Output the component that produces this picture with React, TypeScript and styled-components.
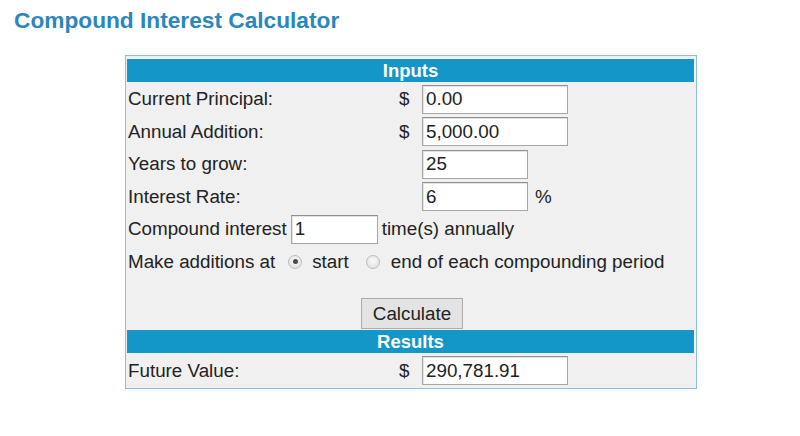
import styled, { createGlobalStyle } from "styled-components";

const Global = createGlobalStyle`
  body {
    margin: 0;
    background: #ffffff;
    font-family: "Liberation Sans", Arial, sans-serif;
    color: #222222;
  }
`;

// Title TOP
const Title = styled.h1`
  margin: 7px 0 0 14px;
  font-size: 22.7px;
  line-height: 26px;
  font-weight: bold;
  color: #2a86bd;
`;

// Calculator box
const Box = styled.div`
  margin: 22px 0 0 125px;
  width: 567px;
  border: 1px solid #8cc0d8;
  background: #f0f0f0;
  padding: 3px 2px 0 1px;
`;

const Bar = styled.div<{ $gap?: number }>`
  height: 23px;
  margin-top: ${(p) => p.$gap ?? 0}px;
  background: #1496c8;
  color: #ffffff;
  font-weight: bold;
  font-size: 18.5px;
  line-height: 23px;
  text-align: center;
`;

const Row = styled.div<{ $h?: number }>`
  display: grid;
  grid-template-columns: 271px 24px auto 1fr;
  align-items: center;
  height: ${(p) => p.$h ?? 32.5}px;
  font-size: 18.8px;
`;

const Label = styled.span`
  padding-left: 1px;
  white-space: nowrap;
`;

const Dollar = styled.span`
  padding-left: 1px;
`;

const Field = styled.input<{ $w: number }>`
  box-sizing: border-box;
  width: ${(p) => p.$w}px;
  height: 29px;
  padding: 0 3px;
  border: 1px solid #a6a6a6;
  border-top-color: #8f8f8f;
  box-shadow: inset 1px 1px 0 #e4e4e4;
  background: #ffffff;
  font-family: "Liberation Sans", Arial, sans-serif;
  font-size: 18.8px;
  color: #222222;
  outline: none;
`;

const Suffix = styled.span`
  padding-left: 7px;
`;

const Line = styled.div`
  display: flex;
  align-items: center;
  height: 32.5px;
  padding-left: 1px;
  font-size: 18.8px;
  white-space: nowrap;
  gap: 4px;
`;

const Radio = styled.span<{ $on?: boolean; $l: number; $r: number }>`
  position: relative;
  display: inline-block;
  box-sizing: border-box;
  width: 14px;
  height: 14px;
  margin: 0 ${(p) => p.$r}px 0 ${(p) => p.$l}px;
  border-radius: 50%;
  border: 1px solid #bcbcbc;
  background: radial-gradient(circle at 50% 40%, #fbfbfb, #dadada);
  &::after {
    content: "";
    display: ${(p) => (p.$on ? "block" : "none")};
    position: absolute;
    left: 3.5px;
    top: 3px;
    width: 5px;
    height: 5px;
    border-radius: 50%;
    background: #4a4a4a;
  }
`;

const ButtonRow = styled.div`
  display: flex;
  justify-content: center;
  align-items: flex-end;
  height: 51px;
`;

const Button = styled.button`
  box-sizing: border-box;
  width: 102px;
  height: 31px;
  margin-left: 3px;
  border: 1px solid #adadad;
  background: #e3e3e3;
  font-family: "Liberation Sans", Arial, sans-serif;
  font-size: 18.8px;
  color: #222222;
  padding: 0;
`;

const App = () => {
  return (
    <>
      <Global />
      <Title>Compound Interest Calculator</Title>
      <Box>
        <Bar>Inputs</Bar>
        <Row style={{ marginTop: 1 }}>
          <Label>Current Principal:</Label>
          <Dollar>$</Dollar>
          <Field $w={146} defaultValue="0.00" />
        </Row>
        <Row>
          <Label>Annual Addition:</Label>
          <Dollar>$</Dollar>
          <Field $w={146} defaultValue="5,000.00" />
        </Row>
        <Row>
          <Label>Years to grow:</Label>
          <Dollar />
          <Field $w={106} defaultValue="25" />
        </Row>
        <Row>
          <Label>Interest Rate:</Label>
          <Dollar />
          <Field $w={106} defaultValue="6" />
          <Suffix>%</Suffix>
        </Row>
        <Line>
          <span>Compound interest</span>
          <Field $w={87} defaultValue="1" />
          <span>time(s) annually</span>
        </Line>
        <Line style={{ gap: 0 }}>
          <span>Make additions at</span>
          <Radio $on $l={13} $r={10} />
          <span>start</span>
          <Radio $l={17} $r={11} />
          <span>end of each compounding period</span>
        </Line>
        <ButtonRow>
          <Button>Calculate</Button>
        </ButtonRow>
        <Bar $gap={1}>Results</Bar>
        <Row $h={35}>
          <Label>Future Value:</Label>
          <Dollar>$</Dollar>
          <Field $w={146} defaultValue="290,781.91" />
        </Row>
      </Box>
    </>
  );
};
export default App;
